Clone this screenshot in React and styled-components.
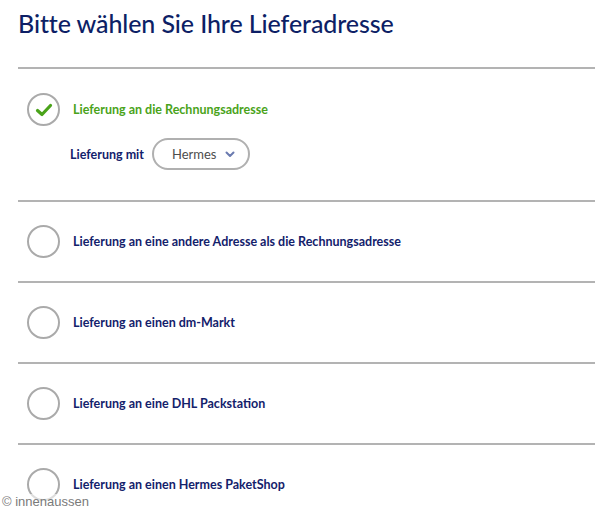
import React from "react";
import styled, { createGlobalStyle } from "styled-components";

const GlobalStyle = createGlobalStyle`
  html, body {
    margin: 0;
    padding: 0;
    background: #fff;
  }
  body {
    font-family: "Lato", "Noto Sans", sans-serif;
  }
`;

const options = [
  "Lieferung an eine andere Adresse als die Rechnungsadresse",
  "Lieferung an einen dm-Markt",
  "Lieferung an eine DHL Packstation",
  "Lieferung an einen Hermes PaketShop",
];

const App = () => {
  return (
    <Page>
      <GlobalStyle />
      <Title>Bitte wählen Sie Ihre Lieferadresse</Title>
      <List>
        <Option>
          <Row>
            <Radio checked>
              <svg width="18" height="14" viewBox="0 0 18 14">
                <path d="M2.5 7.5 L7 11.5 L15.5 2.5" fill="none" stroke="#4aa31a" strokeWidth="3.2" strokeLinecap="round" strokeLinejoin="round" />
              </svg>
            </Radio>
            <Label active>Lieferung an die Rechnungsadresse</Label>
          </Row>
          <Carrier>
            <CarrierLabel>Lieferung mit</CarrierLabel>
            <Select>
              Hermes
              <svg width="10" height="7" viewBox="0 0 10 7">
                <path d="M1.5 1.5 L5 5 L8.5 1.5" fill="none" stroke="#6b7bb0" strokeWidth="2" strokeLinecap="round" strokeLinejoin="round" />
              </svg>
            </Select>
          </Carrier>
        </Option>
        {options.map((o) => (
          <Option key={o}>
            <Row>
              <Radio />
              <Label>{o}</Label>
            </Row>
          </Option>
        ))}
      </List>
      <Watermark>© innenaussen</Watermark>
    </Page>
  );
};

export default App;

const Page = styled.div`
  position: relative;
  width: 600px;
  height: 512px;
  overflow: hidden;
  padding: 0 5px 0 18px;
  box-sizing: border-box;
`;

const Title = styled.h1`
  margin: 0;
  padding-top: 8px;
  height: 69px;
  box-sizing: border-box;
  font-size: 25px;
  font-weight: 500;
  color: #0d1f66;
  letter-spacing: -0.1px;
  border-bottom: 2px solid #b3b3b3;
`;

const List = styled.div`
  display: flex;
  flex-direction: column;
`;

const Option = styled.div`
  display: flex;
  flex-direction: column;
  padding: 23px 0 0;
  height: 81px;
  box-sizing: border-box;
  border-top: 2px solid #b3b3b3;
  &:first-child {
    border-top: none;
    height: 131px;
    padding-top: 24px;
  }
`;

const Row = styled.div`
  display: flex;
  align-items: center;
  gap: 13px;
  padding-left: 9px;
`;

const Radio = styled.span`
  width: 33px;
  height: 33px;
  box-sizing: border-box;
  border-radius: 50%;
  border: 2px solid #aaaaaa;
  display: flex;
  align-items: center;
  justify-content: center;
  flex-shrink: 0;
`;

const Label = styled.span`
  font-size: 12.5px;
  font-weight: 700;
  color: ${(p) => (p.active ? "#4aa31a" : "#13216b")};
`;

const Carrier = styled.div`
  display: flex;
  align-items: center;
  gap: 8px;
  margin-top: 12px;
  padding-left: 52px;
`;

const CarrierLabel = styled.span`
  font-size: 12.5px;
  font-weight: 700;
  color: #13216b;
`;

const Select = styled.div`
  display: flex;
  align-items: center;
  gap: 9px;
  height: 32px;
  width: 98px;
  box-sizing: border-box;
  padding-left: 18px;
  border: 2px solid #b0b0b0;
  border-radius: 16px;
  font-size: 13px;
  color: #4d4d4d;
`;

const Watermark = styled.div`
  position: absolute;
  left: 2px;
  bottom: 3px;
  font-family: "Liberation Sans", Arial, sans-serif;
  font-size: 13px;
  color: #7a7a7a;
  background: rgba(255, 255, 255, 0.6);
`;
